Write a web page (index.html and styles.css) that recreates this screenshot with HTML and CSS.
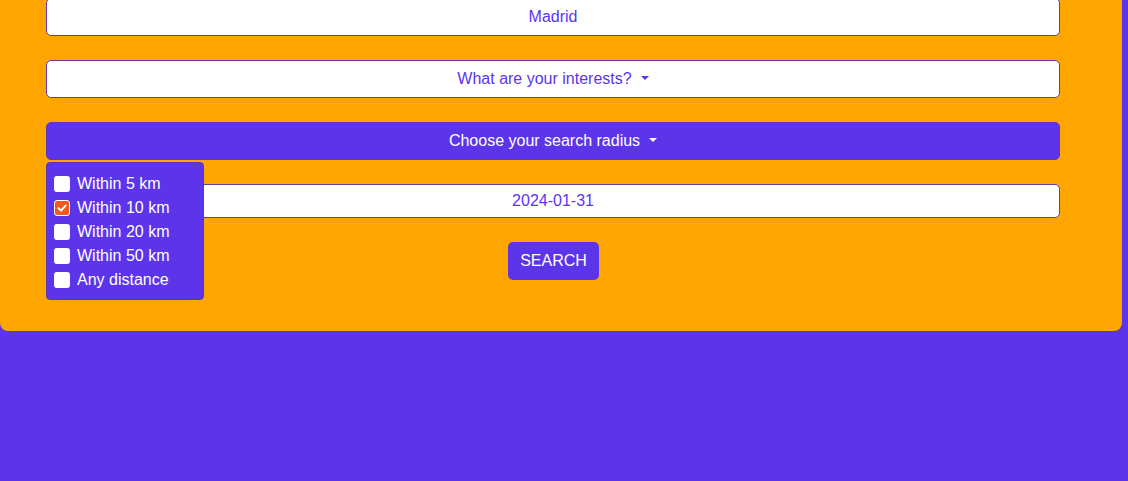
FILE: index.html
```html
<!DOCTYPE html>
<html lang="en">
<head>
<meta charset="utf-8">
<title>Search</title>
<link rel="stylesheet" href="styles.css">
</head>
<body>
<div class="panel">
  <form class="form">
    <div class="field first">Madrid</div>
    <div class="field">What are your interests?<span class="caret"></span></div>
    <div class="dropdown">
      <div class="toggle">Choose your search radius<span class="caret"></span></div>
      <ul class="menu">
        <li><span class="box"></span>Within 5 km</li>
        <li><span class="box checked"><svg viewBox="0 0 16 16" width="16" height="16"><path d="M4.5 8.3 L7 10.6 L11.5 5.6" fill="none" stroke="#fff" stroke-width="2" stroke-linecap="round" stroke-linejoin="round"/></svg></span>Within 10 km</li>
        <li><span class="box"></span>Within 20 km</li>
        <li><span class="box"></span>Within 50 km</li>
        <li><span class="box"></span>Any distance</li>
      </ul>
    </div>
    <div class="field date">2024-01-31</div>
    <div class="actions"><button type="button" class="search">SEARCH</button></div>
  </form>
</div>
</body>
</html>
```
FILE: styles.css
```css
html, body {
  margin: 0;
  padding: 0;
  background: #5c35ea;
  font-family: "Liberation Sans", Arial, sans-serif;
  font-size: 16px;
  overflow: hidden;
}
.panel {
  width: 1122px;
  background: #ffa500;
  border-radius: 0 0 8px 8px;
  padding: 0 62px 51px 46px;
  box-sizing: border-box;
}
.form {
  display: flex;
  flex-direction: column;
  gap: 24px;
}
.field {
  height: 38px;
  box-sizing: border-box;
  background: #fff;
  border: 1px solid #6a3aa8;
  border-radius: 5px;
  color: #5c35ea;
  display: flex;
  align-items: center;
  justify-content: center;
}
.field.first {
  margin-top: -2px;
}
.field.date {
  height: 34px;
}
.caret {
  display: inline-block;
  margin-left: 9px;
  width: 0;
  height: 0;
  border-top: 4px solid currentColor;
  border-left: 4px solid transparent;
  border-right: 4px solid transparent;
  position: relative;
  top: -1px;
}
.dropdown {
  position: relative;
}
.toggle {
  height: 38px;
  box-sizing: border-box;
  background: #5c35ea;
  border: 1px solid #5a3ab8;
  border-radius: 5px;
  color: #fff;
  display: flex;
  align-items: center;
  justify-content: center;
}
.menu {
  position: absolute;
  top: 40px;
  left: 0;
  width: 158px;
  box-sizing: border-box;
  margin: 0;
  padding: 9px 7px 7px 7px;
  list-style: none;
  background: #5c35ea;
  border: 1px solid #5637b8;
  border-radius: 4px;
  color: #fff;
  z-index: 2;
}
.menu li {
  height: 24px;
  display: flex;
  align-items: center;
  gap: 7px;
  white-space: nowrap;
}
.box {
  width: 16px;
  height: 16px;
  box-sizing: border-box;
  background: #fff;
  border-radius: 3px;
  flex: none;
  display: flex;
}
.box.checked {
  background: #f05a1e;
  border: 1px solid #fff;
}
.box.checked svg {
  margin: -1px;
}
.actions {
  display: flex;
  justify-content: center;
}
.search {
  height: 38px;
  padding: 0 12px;
  background: #5c35ea;
  color: #fff;
  border: none;
  border-radius: 5px;
  font-family: "Liberation Sans", Arial, sans-serif;
  font-size: 16px;
  margin-left: 1px;
}
```
